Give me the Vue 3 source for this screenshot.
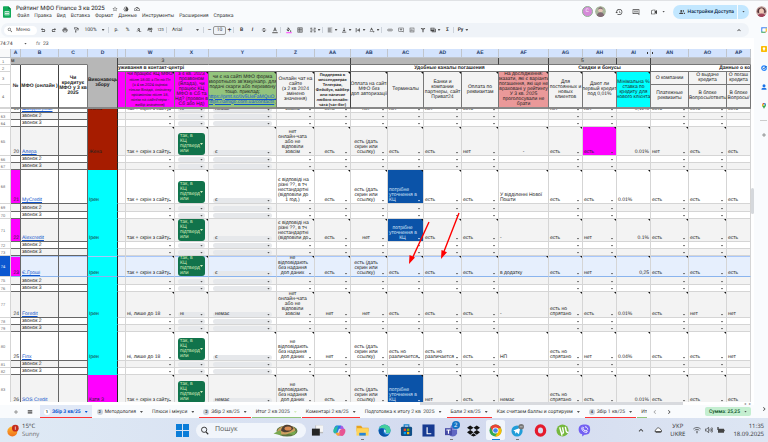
<template>
    <div class="page">
        <header class="top">
            <svg class="logo" viewBox="0 0 24 34">
                <path fill="#0fa958" d="M2 0h14l8 8v24a2 2 0 0 1-2 2H2a2 2 0 0 1-2-2V2a2 2 0 0 1 2-2z" />
                <path fill="#087f3f" d="M16 0l8 8h-8z" />
                <path fill="#fff" d="M5 15h14v12H5zm2 2v3h4v-3zm6 0v3h4v-3zm-6 5v3h4v-3zm6 0v3h4v-3z" fill-rule="evenodd" />
            </svg>
            <div class="titles">
                <div class="title-row">
                    <h1>Рейтинг МФО Finance 3 кв 2025</h1>
                    <button v-for="i in ['star', 'drive', 'cloud']" :key="i" class="icon-btn" :aria-label="i">
                        <svg viewBox="0 0 24 24"><path :d="icons[i]" /></svg>
                    </button>
                </div>
                <nav class="menu">
                    <button v-for="m in menu" :key="m">{{ m }}</button>
                </nav>
            </div>
            <div class="top-right">
                <span class="avatar avatar-letter">С</span>
                <span class="avatar avatar-green"><svg viewBox="0 0 24 24"><circle cx="12" cy="12" r="12" fill="#a9b79c" /><circle cx="12" cy="9" r="5" fill="#e5c7b8" /><path fill="#826b75" d="M4 21c1-10 15-10 16 0-4 4-12 4-16 0zM7 8c0-7 10-7 10 0-3-3-7-3-10 0z" /></svg></span>
                <button class="icon-btn big" aria-label="История"><svg viewBox="0 0 24 24"><path :d="icons.history" /></svg></button>
                <button class="icon-btn big" aria-label="Комментарии"><svg viewBox="0 0 24 24"><path :d="icons.comments" /></svg></button>
                <button class="icon-btn big video" aria-label="Видеовстреча"><svg viewBox="0 0 24 24"><path :d="icons.video" /></svg><i class="caret"></i></button>
                <button class="share"><svg viewBox="0 0 24 24"><path :d="icons.people" /></svg><span>Настройки Доступа</span><i class="share-line"></i><i class="caret"></i></button>
                <span class="avatar"><svg viewBox="0 0 24 24"><circle cx="12" cy="12" r="12" fill="#c9a9a4" /><path fill="#503036" d="M3 14C0 0 24 0 21 14l-3 2V9H7v7z" /><ellipse cx="12" cy="11" rx="5" ry="6" fill="#efc9b6" /><path fill="#a0455a" d="M4 21c2-6 14-6 16 0-4 4-12 4-16 0z" /></svg></span>
            </div>
        </header>

        <div class="middle">
            <main class="main">
                <div class="toolbar">
                    <label class="search-menu">
                        <svg viewBox="0 0 24 24"><path :d="icons.search" /></svg>
                        <input type="text" placeholder="Меню">
                    </label>
                    <template v-for="(t, n) in tools" :key="n">
                        <i v-if="t === '|'" class="sep"></i>
                        <input v-else-if="t.size" class="font-size" type="text" :value="t.size" aria-label="Размер шрифта">
                        <button v-else class="tool" :class="t.cls" :aria-label="t.icon || t.text">
                            <svg v-if="t.icon" viewBox="0 0 24 24"><path :d="icons[t.icon]" /><path v-if="t.bar" :fill="t.bar" d="M1 20h22v5H1z" /></svg>
                            <span v-else>{{ t.text }}</span>
                            <i v-if="t.drop" class="caret"></i>
                        </button>
                    </template>
                    <button class="icon-btn collapse" aria-label="Свернуть"><svg viewBox="0 0 24 24"><path :d="icons.up" /></svg></button>
                </div>

                <div class="formula">
                    <input class="name-box" type="text" value="74:74" aria-label="Диапазон">
                    <i class="caret"></i>
                    <label for="fx">fx</label>
                    <input id="fx" class="fx-input" type="text" value="23">
                </div>

                <div class="grid-wrap">
                    <div class="grid">
                        <table>
                            <colgroup>
                                <col class="c-num">
                                <col v-for="c in cols" :key="c.id" :class="'c-' + c.id">
                            </colgroup>
                            <thead>
                                <tr class="letters">
                                    <th></th>
                                    <th v-for="c in cols" :key="c.id">{{ c.id === 'V' ? '' : c.id }}<i v-if="c.id === 'AI'" class="hid hid-l"></i><i v-if="c.id === 'AN'" class="hid hid-r"></i></th>
                                </tr>
                                <tr class="h1">
                                    <th class="num">1</th>
                                    <th class="left">м</th>
                                    <th></th>
                                    <th></th>
                                    <th rowspan="4" class="dark-r">Виконавець<br>збору</th>
                                    <th colspan="3">3</th>
                                    <th colspan="3" class="dark-r"></th>
                                    <th colspan="4" class="dark-r"></th>
                                    <th class="dark-r"></th>
                                    <th colspan="2" class="dark-r">5</th>
                                    <th class="dark-r"></th>
                                    <th colspan="3"></th>
                                </tr>
                                <tr class="h2">
                                    <th class="num">2</th>
                                    <th rowspan="3" class="dark-r">№</th>
                                    <th rowspan="3" class="dark-r">МФО (онлайн )</th>
                                    <th rowspan="3">Чи<br>кредитує<br>МФО у 3 кв<br>2025</th>
                                    <th colspan="6" class="left dark-r">уживання в контакт-центрі</th>
                                    <th colspan="5" class="dark-r">Удобные каналы погашения</th>
                                    <th colspan="3" class="dark-r">Скидки и бонусы</th>
                                    <th colspan="3" class="right">Данные о ко</th>
                                </tr>
                                <tr class="h3">
                                    <th class="num">3</th>
                                    <th rowspan="2" class="magenta"></th>
                                    <th v-for="h in heads" :key="h.text" rowspan="2" :class="h.cls">
                                        <div class="head"><span v-if="h.lead">{{ h.lead }}</span><span :class="{ tiny: h.tiny }">{{ h.text }}</span><template v-if="h.links"><a href="#">https://prnt.sc/0v5UeFaMQuO_</a><span><a href="#">https://amigo.com.ua/contacts</a> )</span></template></div>
                                        <i class="note"></i>
                                    </th>
                                    <th>О компании</th>
                                    <th>О выдаче<br>кредита</th>
                                    <th>О погаш<br>кредита</th>
                                </tr>
                                <tr class="h4">
                                    <th class="num">4</th>
                                    <th>Платежные<br>реквизиты</th>
                                    <th>В блоке<br>Вопросы/ответы</th>
                                    <th>В блоке<br>Вопросы/</th>
                                </tr>
                            </thead>
                            <tbody>
                                <tr v-for="r in rows" :key="r.n" :class="{ odd: r.n % 2, selected: r.n === 74 }" :style="{ '--h': r.h + 'px' }">
                                    <th class="num"><div class="cell">{{ r.n === 62 ? '' : r.n }}</div></th>
                                    <td v-for="c in cols" :key="c.id" :class="cellClass(r, c)">
                                        <div class="cell">
                                            <a v-if="c.id === 'B' && r.v" href="#">{{ r.v.B }}</a>
                                            <button v-else-if="c.chip" class="chip" :class="{ green: value(r, c) === confirmed }"><span>{{ value(r, c) }}</span><i class="caret"></i></button>
                                            <template v-else>
                                                <span class="txt">{{ value(r, c) }}</span>
                                                <button v-if="c.drop" class="pick" aria-label="Выбрать"><i class="caret"></i></button>
                                            </template>
                                        </div>
                                        <i v-if="hasNote(r, c)" class="note"></i>
                                    </td>
                                </tr>
                            </tbody>
                        </table>
                        <svg class="arrows" viewBox="0 0 56 56">
                            <path stroke="#f00" stroke-width="1.4" d="M24 10L7 47M54 1L38 42" />
                            <path fill="#f00" d="M4 52l.5-9 5.500 2.500zM36 47l.5-9 5.500 2.200z" />
                        </svg>
                    </div>
                    <div class="vscroll"><i></i></div>
                </div>
                <div class="hscroll"><i></i><span>◂</span><span>▸</span></div>

                <footer class="tabs">
                    <button class="tab-icon plus" aria-label="Добавить лист"><svg viewBox="0 0 24 24"><path :d="icons.plus" /></svg></button>
                    <button class="tab-icon" aria-label="Все листы"><svg viewBox="0 0 24 24"><path :d="icons.list" /></svg></button>
                    <div class="tab-list">
                        <button v-for="t in tabs" :key="t.text" class="tab" :class="[t.color, { active: t.active }]">
                            <b v-if="t.badge">{{ t.badge }}</b>
                            <span>{{ t.text }}</span>
                            <i class="caret"></i>
                        </button>
                    </div>
                    <button class="tab-icon nav" aria-label="Назад"><svg viewBox="0 0 24 24"><path opacity=".5" :d="icons.back" /></svg></button>
                    <button class="tab-icon nav" aria-label="Вперёд"><svg viewBox="0 0 24 24"><path :d="icons.next" /></svg></button>
                    <button class="sum">Сумма: 25,25<i class="caret"></i></button>
                </footer>
            </main>

            <aside class="side">
                <button aria-label="Календарь"><svg viewBox="0 0 24 24"><path fill="#4285f4" d="M1 1h18v5H6v13H1z" /><path fill="#1967d2" d="M19 1h4v5h-4z" /><path fill="#fbbc04" d="M18 6h5v12h-5z" /><path fill="#34a853" d="M1 18h17v5H1z" /><path fill="#ea4335" d="M18 18h5l-5 5z" /><path fill="#fff" d="M6 6h12v12H6z" /></svg></button>
                <button aria-label="Keep"><svg viewBox="0 0 24 24"><rect width="24" height="24" rx="3" fill="#fbbc04" /><path fill="#fff" d="M12 5a5 5 0 0 0-3 9v2h6v-2a5 5 0 0 0-3-9zM9 17h6v2H9z" /></svg></button>
                <button aria-label="Задачи"><svg viewBox="0 0 24 24"><circle cx="12" cy="12" r="9" fill="none" stroke="#2684fc" stroke-width="5" /><path fill="none" stroke="#0757b8" stroke-width="4" d="M8 11l4 4L22 4" /></svg></button>
                <button aria-label="Контакты"><svg viewBox="0 0 24 24"><circle cx="12" cy="7" r="6" fill="#1a73e8" /><path fill="#1a73e8" d="M2 23v-4c2-6 18-6 20 0v4z" /></svg></button>
                <button aria-label="Карты"><svg viewBox="0 0 24 24"><path fill="#34a853" d="M12 24C10 16 4 15 4 8l8-8c6 0 8 4 8 8 0 7-6 8-8 16z" /><path fill="#4285f4" d="M12 0c5 0 7 3 8 6l-8 2z" /><path fill="#ea4335" d="M5 4c2-3 4-4 7-4v8z" /><path fill="#fbbc04" d="M4 8l1-4 7 4-6 6z" /><circle cx="12" cy="8" r="3" fill="#fff" /></svg></button>
                <hr>
                <button aria-label="Дополнения"><svg viewBox="0 0 24 24"><path fill="#444" :d="icons.plus" /></svg></button>
                <button class="side-end" aria-label="Скрыть панель"><svg viewBox="0 0 24 24"><path fill="#444" :d="icons.next" /></svg></button>
            </aside>
        </div>

        <div class="taskbar">
            <div class="weather">
                <svg viewBox="0 0 36 36"><defs><linearGradient id="sun" x1="0" y1="0" x2="0" y2="1"><stop offset="0" stop-color="#ffb52b" /><stop offset="1" stop-color="#f0701c" /></linearGradient></defs><circle cx="16" cy="21" r="15" fill="url(#sun)" /><circle cx="25" cy="11" r="10" fill="#c42b1c" /><path stroke="#fff" stroke-width="2" d="M25 6v10" /></svg>
                <div>15°C<br><span>Sunny</span></div>
            </div>
            <button class="start" aria-label="Пуск"><svg viewBox="0 0 26 26"><path fill="#0b7dd8" d="M0 0h12v12H0zM14 0h12v12H14zM0 14h12v12H0zM14 14h12v12H14z" /></svg></button>
            <label class="win-search">
                <svg viewBox="0 0 24 24"><circle cx="11" cy="10" r="7" fill="none" stroke="#333" stroke-width="2.500" /><path stroke="#333" stroke-width="3" d="M16 16l6 6" /></svg>
                <input type="text" placeholder="Пошук">
                <svg class="food" viewBox="0 0 50 28"><ellipse cx="28" cy="16" rx="21" ry="11" fill="#5c7540" /><path fill="#cda060" d="M8 20C8 4 38 0 44 12c4 9-27 15-36 8z" /><path fill="#4f4034" d="M16 15c2-14 20-15 25-4-5 8-20 10-25 4z" /><ellipse cx="30" cy="11" rx="7" ry="4" fill="#d98a52" /><path fill="#78a850" d="M1 21l14-7 2 11zM29 22l18-7-4 9z" /></svg>
            </label>
            <div class="apps">
                <button class="app" aria-label="Представление задач"><svg viewBox="0 0 28 28"><path fill="#bbb" d="M9 3h17v17H9z" /><path fill="#f5f5f5" d="M11 3h15v14H11z" /><path fill="#252525" d="M2 10h17v15H2z" /></svg></button>
                <button class="app" aria-label="Copilot"><svg viewBox="0 0 28 28"><path fill="#2677e8" d="M7 3h10l4 7h-8L9 20H4C-1 19 2 5 7 3z" /><path fill="#28bda0" d="M3 8l8-5-4 17c-8 1-7-6-4-12z" /><path fill="#e75493" d="M11 25l4-12 5-3h4c6 2 1 15-4 16z" /><path fill="#f5a43b" d="M6 19h10l-3 6c-4 2-7-2-7-6z" /><path fill="#a45ee5" d="M17 3c6 0 5 7 8 8H15z" /></svg></button>
                <button class="app run" aria-label="Проводник"><svg viewBox="0 0 28 28"><path fill="#e6a21f" d="M1 4h10l3 4h13v8H1z" /><path fill="#ffd458" d="M1 9h26v16H1z" /><path fill="#2785d6" d="M7 19h14v6H7z" /></svg></button>
                <button class="app" aria-label="Edge"><svg viewBox="0 0 28 28"><circle cx="14" cy="14" r="13" fill="#1479cc" /><path fill="#44cf9d" d="M2 10C6-3 27-1 27 14c0 7-9 7-10 3 3-8-7-10-15-7z" /><path fill="#0b54a6" d="M2 13c8-8 13 0 9 4 0 6 7 8 13 6-11 10-24 0-22-10z" /><path fill="#e3f2ff" d="M13 12c4 0 5 4 3 6 1 3 6 3 10 1-4 5-15 2-13-7z" /></svg></button>
                <button class="app" aria-label="Store"><svg viewBox="0 0 28 28"><path fill="none" stroke="#1684c9" stroke-width="2.500" d="M9 7V2h10v5" /><rect x="2" y="6" width="24" height="20" rx="3" fill="#114f87" /><path fill="#f25022" d="M8 10h5v5H8z" /><path fill="#7fba00" d="M15 10h5v5h-5z" /><path fill="#00a4ef" d="M8 17h5v5H8z" /><path fill="#ffb900" d="M15 17h5v5h-5z" /></svg></button>
                <button class="app" aria-label="L"><svg viewBox="0 0 28 28"><path fill="#173a91" d="M1 1h26v26H1z" /><path fill="none" stroke="#fff" stroke-width="2.500" d="M11 7v14h9" /></svg></button>
                <button class="app run" aria-label="Teams"><svg viewBox="0 0 28 28"><circle cx="17" cy="7" r="5" fill="#7076d0" /><path fill="#6066c2" d="M8 12h18v8c-3 10-17 9-18 0z" /><path fill="#454aa5" d="M0 9h15v15H0z" /><path fill="none" stroke="#fff" stroke-width="2.500" d="M3 13h9M7.500 13v8" /></svg><b>2</b></button>
                <button class="app" aria-label="Dropbox"><svg viewBox="0 0 28 28"><path fill="#111" d="M7 3l7 5-7 5-7-5zM21 3l7 5-7 5-7-5zM7 13l7 5-7 5-7-5zM21 13l7 5-7 5-7-5zM14 20l6 4-6 3-6-3z" /></svg></button>
                <button class="app current" aria-label="Chrome"><svg viewBox="0 0 28 28"><circle cx="14" cy="14" r="13" fill="#34a853" /><path fill="#ea4335" d="M3 7C9-2 22 0 26 9H14l-5 8z" /><path fill="#fbbc04" d="M26 9c4 12-5 19-13 18l7-11-3-7z" /><circle cx="14" cy="14" r="6.500" fill="#fff" /><circle cx="14" cy="14" r="5" fill="#4285f4" /></svg></button>
                <button class="app run" aria-label="Telegram"><svg viewBox="0 0 28 28"><circle cx="13" cy="15" r="12" fill="#229ed9" /><path fill="#fff" d="M5 14l15-6-3 14-5-4-3 3v-5z" /><circle cx="22" cy="6" r="6" fill="#777" /><path stroke="#ddd" stroke-width="1.500" d="M19 6h6" /></svg></button>
                <button class="app" aria-label="Opera"><svg viewBox="0 0 28 28"><ellipse cx="14" cy="14" rx="9" ry="10" fill="none" stroke="#e51b2d" stroke-width="7" /></svg></button>
                <button class="app" aria-label="uTorrent"><svg viewBox="0 0 28 28"><circle cx="14" cy="14" r="13" fill="#76b83f" /><path fill="none" stroke="#fff" stroke-width="3" d="M8 7l3 11c1 3 6 2 5-1L14 7M20 6l2 9c1 3 3 4 4 2M11 17l2 8" /></svg></button>
                <button class="app" aria-label="Viber"><svg viewBox="0 0 28 28"><path fill="#7360f2" d="M5 3c5-3 15-3 19 1 3 4 3 13-1 17-3 2-7 2-9 2l-5 4v-5C-1 20 0 6 5 3z" /><path fill="none" stroke="#fff" stroke-width="2" d="M9 7c-3 5 4 12 10 11l1-3-3-1-2 1-4-5 1-2-2-2M15 6c4 0 6 3 6 6" /></svg></button>
            </div>
            <div class="tray">
                <svg viewBox="0 0 24 24"><path :d="icons.up" /></svg>
                <svg viewBox="0 0 24 24"><path fill="#fff" stroke="#444" stroke-width="2.500" d="M6 19a5 5 0 0 1 1-9c2-6 10-6 12 0 5 1 5 9 0 9z" /><path fill="#555" d="M2 15h20v4H4z" /></svg>
                <div class="lang">УКР<br>UKRE</div>
                <svg viewBox="0 0 24 24"><path fill="none" stroke="#333" stroke-width="2" d="M1 9c7-6 15-6 22 0M5 13c5-4 9-4 14 0M9 17c2-2 4-2 6 0" /><circle cx="12" cy="20" r="2" /></svg>
                <svg viewBox="0 0 24 24"><path fill="none" stroke="#333" stroke-width="2" d="M1 9h4l6-5v16l-6-5H1zM14 9c2 2 2 4 0 6M17 6c4 4 4 8 0 12M20 4c5 5 5 11 0 16" /></svg>
                <svg viewBox="0 0 24 24"><path d="M1 3h4v5h16v3h2v5h-2v4H3v-8H1z" /></svg>
                <div class="clock">11:35<br>18.09.2025</div>
            </div>
        </div>
    </div>
</template>

<script setup>
const menu = ['Файл', 'Правка', 'Вид', 'Вставка', 'Формат', 'Данные', 'Инструменты', 'Расширения', 'Справка'];

const icons = {
    star: 'M22 9.200l-7.200-.6L12 2 9.200 8.600 2 9.200l5.500 4.800L5.800 21 12 17.300 18.200 21l-1.600-7L22 9.200zM12 15.400l-3.800 2.300 1-4.300-3.300-2.900 4.400-.4L12 6.100l1.700 4 4.400.4-3.300 2.900 1 4.300z',
    drive: 'M8 3h8l6 10-4 8H6l-4-8zm1 2L4.500 13 7 19h4l-3-5 5-9zm3 5l-2 4h4z',
    cloud: 'M19 10A7 7 0 0 0 6 8a6 6 0 0 0 0 12h13a5 5 0 0 0 0-10zm0 8H6a4 4 0 0 1 0-8h1.500a5 5 0 0 1 9.500 2h2a3 3 0 0 1 0 6zM10 16l-3-3 1.400-1.400L10 13.200l4-4 1.400 1.400z',
    history: 'M13 3a9 9 0 0 0-9 9H1l4 4 4-4H6a7 7 0 1 1 2 5l-1.400 1.400A9 9 0 1 0 13 3zm-1 5v5l4.300 2.500.7-1.200-3.500-2.100V8z',
    comments: 'M22 4H2v14h16l4 4zM20 6v11l-1-1H4V6zM6 8h12v2H6zm0 3h12v2H6z',
    video: 'M16 10V5H8L3 8v11h13v-4l5 4V6zm-2 7H5V9l4-2h5z',
    people: 'M9 12a4 4 0 1 0 0-8 4 4 0 0 0 0 8zm0 2c-3 0-8 1-8 4v2h16v-2c0-3-5-4-8-4zm7-2a4 4 0 0 0 0-8l-1 .2a6 6 0 0 1 0 7.600zm2 2.300c2 1 2 2 2 5.700h4v-2c0-2-3-3.300-6-3.700z',
    search: 'M15.500 14h-.8l-.3-.3A6.500 6.500 0 1 0 13.700 14.400l.3.3v.8l5 5 1.500-1.500zm-6 0a4.500 4.500 0 1 1 0-9 4.500 4.500 0 0 1 0 9z',
    undo: 'M4 9l6-5v4h5a6 6 0 0 1 0 12H7v-3h8a3 3 0 0 0 0-6h-5v4z',
    redo: 'M20 9l-6-5v4H9a6 6 0 0 0 0 12h8v-3H9a3 3 0 0 1 0-6h5v4z',
    print: 'M19 8H5c-2 0-3 1-3 3v6h4v4h12v-4h4v-6c0-2-1-3-3-3zm-3 11H8v-5h8zM18 3H6v4h12zM4 15v-4h16v4h-2v-3H6v3z',
    paint: 'M18 4V2H4v7h14V7h2v4H10v4H9v7h4v-7h-1v-2h10V4zM16 7H6V4h10z',
    decLess: 'M3 15h3v3H3zM11 4c6 0 6 12 0 12s-6-12 0-12zm0 3c-2 0-2 6 0 6s2-6 0-6zM21 16v2h-6v3l-4-4 4-4v3z',
    decMore: 'M1 11h3v3H1zM8 3c6 0 6 11 0 11S2 3 8 3zm0 3c-2 0-2 5 0 5s2-5 0-5zM17 3c6 0 6 11 0 11S11 3 17 3zm0 3c-2 0-2 5 0 5s2-5 0-5zM10 17h6v-3l4 4-4 4v-3h-6z',
    strike: 'M3 11h18v2H3zM7 9c-2-7 10-7 10-1h-3c0-3-6-2-4 1zM7 15h3c0 4 6 2 4-1h3c1 8-10 8-10 1z',
    color: 'M10.500 2L5 17h3l1-3h6l1 3h3L13.500 2zM10 11l2-6 2 6z',
    fill: 'M16 9L8 1 6 3l2 2-6 6 7 7zM9 7l4 4H5zM19 12s-3 3-3 5c0 3 5 3 5 0 0-2-2-5-2-5z',
    borders: 'M2 2h20v20H2zm3 3v5h5V5zm8 0v5h6V5zm-8 8v6h5v-6zm8 0v6h6v-6z',
    merge: 'M2 3h7v3H5v3H2zM15 3h7v6h-3V6h-4zM2 15h3v3h4v3H2zM19 15h3v6h-7v-3h4zM2 11h5V8l4 4-4 4v-3H2zM22 11h-5V8l-4 4 4 4v-3h5z',
    align: 'M3 3h18v2H3zm0 4h12v2H3zm0 4h18v2H3zm0 4h12v2H3zm0 4h18v2H3z',
    valign: 'M11 3h3v9h4l-6 6-5-6h4zM4 19h17v3H4z',
    wrap: 'M3 4h3v17H3zM18 4h2v17h-2zM8 11h6V7l5 5-5 6v-4H8z',
    rotate: 'M9 3L4 15h2l2-3h5l1 3h3L11 3zm0 7l1.500-4L12 10zM3 18h15v-3l4 4-4 4v-3H3z',
    link: 'M4 12a3 3 0 0 1 3-3h4V7H7a5 5 0 0 0 0 10h4v-2H7a3 3 0 0 1-3-3zm4 1h8v-2H8zm9-6h-4v2h4a3 3 0 0 1 0 6h-4v2h4a5 5 0 0 0 0-10z',
    comment: 'M2 3h20v19l-4-4H2zm2 2v11h16V5zm7 1h2v4h4v2h-4v3h-2v-3H7v-2h4z',
    chart: 'M3 3h18v18H3zm2 2v14h14V5zm2 5h2v7H7zm4-3h2v10h-2zm4 6h2v4h-2z',
    filter: 'M3 4h18l-7 9v8h-4v-8zM8 6l4 5 4-5z',
    views: 'M2 3h16v14H2zm18 4h3v14H7v-3h13zM5 6v2h10V6zm0 4v2h10v-2z',
    up: 'M12 8l-7 7 2 2 5-5 5 5 2-2z',
    back: 'M16 6l-2-2-8 8 8 8 2-2-6-6z',
    next: 'M8 6l2-2 8 8-8 8-2-2 6-6z',
    plus: 'M20 13h-7v7h-2v-7H4v-2h7V4h2v7h7z',
    list: 'M3 4h18v3H3zm0 5h18v2H3zm0 4h18v3H3zm0 5h18v2H3z',
};

const tools = [
    { icon: 'undo' }, { icon: 'redo' }, { icon: 'print' }, { icon: 'paint' },
    { text: '100%', drop: true, cls: 'zoom' }, '|',
    { text: 'р.' }, { text: '%' }, { icon: 'decLess' }, { icon: 'decMore' }, { text: '123', cls: 'small' }, '|',
    { text: 'Arial', drop: true, cls: 'font' }, '|',
    { text: '−', cls: 'step' }, { size: 10 }, { text: '+', cls: 'step' }, '|',
    { text: 'B', cls: 'bold' }, { text: 'I', cls: 'italic' }, { icon: 'strike' }, { icon: 'color', bar: '#777' }, '|',
    { icon: 'fill', bar: '#ff66ff' }, { icon: 'borders' }, { icon: 'merge', drop: true, cls: 'drop wide' }, '|',
    { icon: 'align', drop: true, cls: 'drop' }, { icon: 'valign', drop: true, cls: 'drop' },
    { icon: 'wrap', drop: true, cls: 'drop' }, { icon: 'rotate', drop: true, cls: 'drop' }, '|',
    { icon: 'link' }, { icon: 'comment' }, { icon: 'chart' }, { icon: 'filter' },
    { icon: 'views', drop: true, cls: 'drop' }, { text: 'Σ', cls: 'bold' }, '|',
    { text: 'Pу', drop: true, cls: 'drop bold' },
];

// drop - стрілка вибору, chip - випадаючий список у вигляді плашки
const cols = [
    { id: 'A' }, { id: 'B' }, { id: 'C' }, { id: 'D' }, { id: 'V' },
    { id: 'W', drop: true }, { id: 'X', chip: true }, { id: 'Y', chip: true },
    { id: 'Z', drop: true }, { id: 'AA', drop: true }, { id: 'AB', drop: true },
    { id: 'AC', drop: true }, { id: 'AD', drop: true }, { id: 'AE', drop: true },
    { id: 'AF' }, { id: 'AG', drop: true }, { id: 'AH', drop: true }, { id: 'AI' },
    { id: 'AN', drop: true }, { id: 'AO', drop: true }, { id: 'AP' },
];

const heads = [
    { cls: 'magenta', lead: 'чи працює КЦ МФО', text: 'після 18:00 з Пн по Пт\n(з 4 кв.2024 оцінює\nтільки Влада, спочатку\nпрозвоном після 18,\nпотім на сайті/терм -\nвибір значення)', tiny: true },
    { cls: 'magenta', text: 'з 4 кв. 2023\nпрозвоном\n(Влада), чи\nпрацює КЦ\nМФО в Сб та\nНд? (провон в\nСб або Нд)', tiny: false },
    { cls: 'green-bg', text: "чи є на сайті МФО форма\nзворотнього зв'язку/напр. для\nподачі скарги або перезвону\nтощо. приклад:", links: true },
    { text: 'Онлайн чат на\nсайте\n(з 2 кв 2024\nзмінено\nзначення)' },
    { cls: 'strong dark-r', text: 'Поддержка в\nмессенджерах\nТелеграм,\nФейсбук, вайбер\nили наличие\nлюбого онлайн-\nчата (чат-бот)', tiny: true },
    { text: 'Оплата на сайті\nМФО без\nдоп авторизації' },
    { text: 'Терминалы' },
    { text: 'Банки и\nкомпании\nпартнеры, сайт\nПриват24' },
    { text: 'Оплата по\nреквизитам' },
    { cls: 'rose', text: 'На дослідження:\nвказати, які є варіанти\nпогашення, які ще не\nвраховані у рейтингу\nУ 3 кв. 2025\nпроголосували не\nбрати' },
    { text: 'Для\nпостоянных и\nновых\nклиентов' },
    { text: 'Дают ли\nпервый кредит\nпод 0,01%' },
    { cls: 'cyan', text: 'Мінімальна %\nставка по\nкредиту для\nнового клієнта' },
];

const confirmed = 'так, в\nКЦ\nпідтверд\nили';
const site = 'так + скрін з сайту';
const noChat = 'нет\nонлайн-чата\nабо не\nвідповіли\nзовсім';
const noData = 'не\nвідповідають\nбез надання\nдоп даних';
const shot = 'есть (дать\nскрин или\nссылку)';
const clarify = 'потрібне\nуточнення в\nКЦ';
const hidden = 'есть но\nспрятано';
const merged = 'есть но\nразличается';

const make = (...a) => Object.fromEntries(['A', 'B', 'D', 'W', 'X', 'Y', 'Z', 'AA', 'AB', 'AC', 'AD', 'AE', 'AF', 'AG', 'AH', 'AI', 'AN', 'AO', 'AP'].map((k, i) => [k, a[i]]));

const rows = [
    { n: 62, h: 4, v: make('19', 'Швидкогроші', 'Жена', site, 'ні', 'немає', 'зовсім', 'есть', 'нет', 'нет', 'нет', 'есть', '-', 'нет', 'нет', '0,12%', 'есть', 'есть', 'есть') },
    { n: 63, h: 7 },
    { n: 64, h: 7 },
    { n: 65, h: 29, v: make('20', 'Алера', 'Жена', site, confirmed, 'є', noChat, 'есть', shot, 'есть', 'есть', 'нет', '-', 'есть', 'есть', '0.01%', 'нет', 'есть', 'есть'), marks: { AH: 'magenta', AF: 'center' } },
    { n: 66, h: 7 },
    { n: 67, h: 7 },
    { n: 68, h: 34, v: make('21', 'MyCredit', 'Ірен', site, confirmed, 'є', 'є відповіді на\nрізні ??, в тч\nнестандартні\n(відповіли до\n1 год.)', 'есть', shot, clarify, 'есть', 'есть', 'У відділенні Нової\nПошти', 'есть', 'есть', '0.01%', 'есть', 'есть', 'есть'), marks: { A: 'magenta', AC: 'blue', AI: 'left' }, plain: ['Y'] },
    { n: 69, h: 8 },
    { n: 70, h: 7 },
    { n: 71, h: 23, v: make('22', 'Alexcredit', 'Ірен', site, confirmed, 'є', 'є відповіді на\nрізні ??, в тч\nнестандартні\n(відповіли до', 'есть', 'нет', clarify, 'есть', 'есть', '-', 'есть', 'нет', '0.1%', 'есть', 'есть', 'есть'), marks: { A: 'magenta', AC: 'blue center' }, plain: ['Y', 'AF'] },
    { n: 72, h: 7 },
    { n: 73, h: 7 },
    { n: 74, h: 21, v: make('23', 'Є.Гроші', 'Ірен', site, confirmed, 'є', noData, 'есть', shot, 'есть', 'есть', 'есть', 'в додатку', 'есть', 'нет', '0,25', 'есть', 'есть', 'есть'), marks: { A: 'magenta' }, plain: ['Y'] },
    { n: 75, h: 8 },
    { n: 76, h: 7 },
    { n: 77, h: 26, v: make('24', 'Foredit', 'Ірен', 'ні, лише до 18', 'ні', 'немає', noChat, 'нет', 'нет', 'есть', 'есть', 'есть', '-', hidden, 'есть', '0.01%', 'есть', 'нет', 'нет'), marks: { AI: 'left' }, plain: ['Y', 'AF'] },
    { n: 78, h: 7 },
    { n: 79, h: 7 },
    { n: 80, h: 29, v: make('25', 'Finx', 'Ірен', 'ні, лише до 18', confirmed, 'є', noData, 'нет', shot, merged, merged, 'есть', 'НП', hidden, 'нет', '0.04%', 'есть', 'есть', 'нет'), marks: { AI: 'left' } },
    { n: 81, h: 7 },
    { n: 82, h: 7 },
    { n: 83, h: 29, v: make('26', 'SOS Credit', 'Катя З', site, confirmed, 'немає', noData, 'есть', shot, clarify, 'нет', 'есть', 'немає', hidden, 'есть', '0.01%', 'есть', 'есть', 'есть'), marks: { AC: 'blue' } },
];

const value = (r, c) => {
    if (r.v) return r.v[c.id];
    if (c.id === 'B') return [63, 66, 69, 72, 75, 78, 81].includes(r.n) ? 'звонок 2' : 'звонок 3';
    return '';
};

const executor = (n) => {
    if (n < 68) return 'maroon';
    return n < 83 ? 'cyan' : 'magenta';
};

const cellClass = (r, c) => [
    'k-' + c.id,
    c.id === 'D' ? executor(r.n) : '',
    r.marks?.[c.id] ?? '',
];

const hasNote = (r, c) => r.v && r.n > 62 && !['A', 'B', 'C', 'D', 'V', 'AP'].includes(c.id) && !r.plain?.includes(c.id);

const tabs = [
    { text: 'Збір 3 кв/25', badge: 1, color: 'red', active: true },
    { text: 'Методология', badge: 2 },
    { text: 'Плюси і мінуси' },
    { text: 'Збір 2 кв/25', badge: 2, color: 'red' },
    { text: 'Итог 2 кв 2025', color: 'green' },
    { text: 'Коментарі 2 кв/25', color: 'red' },
    { text: 'Подготовка к итогу 2 кв  2025' },
    { text: 'Бали 2 кв/25', color: 'red' },
    { text: 'Как считаем баллы и сортируем' },
    { text: 'Збір 1 кв/25', badge: 4, color: 'red' },
    { text: 'Итог 1 кв', color: 'green' },
];
</script>

<style>
body {
    margin: 0;
    overflow: hidden;
}
</style>

<style scoped>
.page {
    height: 100vh;
    display: flex;
    flex-direction: column;
    overflow: hidden;
    background: #f9fbfd;
    color: #333;
    font: 5px/6px Roboto, sans-serif;
    text-rendering: geometricPrecision;
}

.page * {
    box-sizing: border-box;
}

button,
input {
    font: inherit;
    color: inherit;
    text-rendering: inherit;
    padding: 0;
    margin: 0;
    border: 0;
    background: none;
    min-width: 0;
}

svg {
    display: block;
    flex: none;
    fill: #444;
}

.caret {
    flex: none;
    width: 3px;
    height: 2px;
    background: #555;
    clip-path: polygon(0 0, 100% 0, 50% 100%);
}

/* верхня панель */
.top {
    flex: none;
    height: 22px;
    display: flex;
    align-items: center;
    padding: 0 1px 0 3px;
    border-top: 1px solid #e0e2e5;
}

.logo {
    width: 8px;
    height: 12px;
    margin-right: 5px;
}

.title-row {
    display: flex;
    align-items: center;
    gap: 5px;
}

h1 {
    margin: 0 2px 0 0;
    font-size: 6px;
    line-height: 8px;
    font-weight: 400;
    color: #222;
}

.icon-btn svg {
    width: 6px;
    height: 6px;
}

.menu {
    display: flex;
    gap: 5px;
    padding-left: 1px;
}

.top-right {
    margin-left: auto;
    display: flex;
    align-items: center;
}

.avatar {
    width: 11px;
    height: 11px;
    border-radius: 50%;
    overflow: hidden;
    margin-right: 2px;
}

.avatar-letter {
    background: #d58ad8;
    border: 1px solid #8fb493;
    color: #fff;
    line-height: 9px;
    text-align: center;
}

.avatar-green {
    margin-right: 5px;
}

.top-right > .avatar:last-child {
    margin: 0 0 0 7px;
}

.icon-btn.big {
    width: 17px;
    display: flex;
    justify-content: center;
}

.big svg {
    width: 8px;
    height: 8px;
}

.icon-btn.video {
    width: 26px;
    align-items: center;
    gap: 4px;
}

.share {
    display: flex;
    align-items: center;
    height: 14px;
    margin-left: 2px;
    padding: 0 4px 0 6px;
    border-radius: 7px;
    background: #c2e7ff;
    color: #0b2545;
    font-weight: 500;
    gap: 3px;
}

.share svg {
    width: 6px;
    height: 6px;
}

.share-line {
    width: 1px;
    height: 14px;
    background: #f9fbfd;
    margin: 0 1px 0 0;
}

.middle {
    flex: 1;
    min-height: 0;
    display: flex;
}

.main {
    flex: 1;
    min-width: 0;
    display: flex;
    flex-direction: column;
}

/* панель інструментів */
.toolbar {
    flex: none;
    display: flex;
    align-items: center;
    height: 14px;
    margin: 1px 5px 1px 1px;
    padding: 0 7px 0 3px;
    border-radius: 7px;
    background: #eff3f8;
}

.search-menu {
    flex: none;
    width: 33px;
    height: 9px;
    padding-left: 3px;
    display: flex;
    align-items: center;
    gap: 3px;
    border-radius: 5px;
    background: #fff;
}

.search-menu svg {
    width: 6px;
    height: 6px;
}

.search-menu input {
    width: 18px;
}

.tool {
    flex: none;
    width: 11px;
    display: flex;
    align-items: center;
    justify-content: center;
}

.tool svg {
    width: 6px;
    height: 6px;
    overflow: visible;
}

.tool.zoom {
    width: 27px;
    gap: 5px;
}

.tool.font {
    width: 34px;
    padding: 0 4px 0 3px;
    justify-content: space-between;
}

.tool.drop {
    width: 14px;
    gap: 2px;
}

.tool.wide {
    width: 17px;
    padding-left: 3px;
}

.tool.step {
    width: 7px;
    font-size: 7px;
}

.tool.small {
    font-size: 4px;
}

.tool.bold {
    font-weight: 700;
}

.tool.italic {
    font-style: italic;
    font-weight: 700;
}

.sep {
    flex: none;
    width: 3px;
    height: 6px;
    border-left: 1px solid #ccd2da;
}

.font-size {
    width: 13px;
    height: 9px;
    text-align: center;
    border: 1px solid #999;
    border-radius: 2px;
}

.collapse {
    margin-left: auto;
}

.formula {
    flex: none;
    display: flex;
    align-items: center;
    height: 11px;
    background: #fff;
}

.name-box {
    width: 24px;
}

.formula label {
    margin-left: 9px;
    width: 7px;
    font-style: italic;
    color: #777;
}

.fx-input {
    flex: 1;
}

/* таблиця */
.grid-wrap {
    flex: 1;
    min-height: 0;
    display: flex;
}

.grid {
    flex: 1;
    min-width: 0;
    position: relative;
    overflow: hidden;
    background: #fff;
}

table {
    width: 100%;
    table-layout: fixed;
    border-collapse: separate;
    border-spacing: 0;
    font: 5px/5px "Liberation Sans", Arial, sans-serif;
    color: #222;
}

.c-num { width: 11px; }
.c-A { width: 10px; }
.c-B { width: 38px; }
.c-C { width: 29px; }
.c-D { width: 30px; }
.c-V { width: 8px; }
.c-W { width: 49px; }
.c-X { width: 34px; }
.c-Y { width: 68px; }
.c-Z { width: 38px; }
.c-AA { width: 36px; }
.c-AB { width: 37px; }
.c-AC { width: 36px; }
.c-AD { width: 38px; }
.c-AE { width: 37px; }
.c-AF { width: 50px; }
.c-AG { width: 34px; }
.c-AH { width: 34px; }
.c-AI { width: 34px; }
.c-AN { width: 38px; }
.c-AO { width: 38px; }

th,
td {
    position: relative;
    padding: 0;
    overflow: hidden;
    white-space: pre;
    border-right: 1px solid #d5d5d5;
    border-bottom: 1px solid #d5d5d5;
}

thead th {
    font-weight: 400;
    background: #f3f3f3;
    border-right-color: #777;
    border-bottom-color: #777;
}

.letters { height: 9px; }
.h1 { height: 7px; }
.h2 { height: 7px; }
.h3 { height: 13px; }
.h4 { height: 24px; }

.letters th {
    background: #d3e3fd;
    border-color: #c0c5cc;
    color: #1f3a68;
    font-weight: 700;
}

.letters th:first-child {
    background: #f8f9fa;
}

.hid {
    position: absolute;
    top: 3px;
    width: 1px;
    height: 2px;
    background: #333;
}

.hid-l { right: 2px; }
.hid-r { left: 1px; }

.h1 th {
    background: #b7b7b7;
    border-right-color: #b7b7b7;
}

.h1 th[rowspan],
.h2 th {
    font-weight: 700;
}

.h2 th {
    background: #fff;
}

.h4 th,
.h3 th[rowspan],
.h2 th[rowspan],
.h1 th[rowspan] {
    border-bottom: 2px solid #888;
}

.head {
    height: 35px;
    display: flex;
    flex-direction: column;
    align-items: center;
    justify-content: center;
    overflow: hidden;
}

.tiny {
    font-size: 4px;
}

.strong {
    font-weight: 700;
}

thead th.dark-r {
    border-right-color: #444;
}

th.left {
    text-align: left;
}

th.right {
    text-align: right;
}

tr .num,
thead tr .num {
    background: #fff;
    border-color: #d5d5d5;
    color: #666;
    font-size: 4px;
    font-weight: 400;
    text-align: center;
    padding-right: 4px;
}

.cell {
    height: calc(var(--h) - 1px);
    display: flex;
    align-items: flex-end;
    overflow: hidden;
    padding: 0 1px;
}

.num .cell {
    align-items: center;
    justify-content: center;
    padding: 0;
}

.txt {
    flex: 1;
    min-width: 0;
}

.pick {
    flex: none;
    width: 6px;
    height: 5px;
    display: flex;
    align-items: center;
    justify-content: center;
}

.odd td {
    background: #f3f3f3;
}

td a,
th a {
    color: #1155cc;
    text-decoration: underline;
}

td.k-A,
td.k-B,
td.k-C {
    border-bottom-color: #666;
    border-right-color: #666;
}

td.k-A {
    text-align: right;
}

td.k-D {
    border-right: 1px solid #222;
}

td.k-AI {
    text-align: right;
}

td.k-Z,
td.k-AA,
td.k-AB,
td.center {
    text-align: center;
}

td.left {
    text-align: left;
}

.page .magenta {
    background: #f0f;
}

.page .cyan {
    background: #0ff;
}

.page .maroon {
    background: #a61c00;
}

td.cyan { border-bottom-color: #0ff; }
td.maroon { border-bottom-color: #a61c00; }

.page .blue {
    background: #0b53a8;
    color: #d6e6fa;
}

.blue .caret {
    background: #d6e6fa;
}

.page .green-bg {
    background: #93c47d;
}

.page .rose {
    background: #ea9999;
}

.k-X .cell { padding: 0 3px; }
.k-Y .cell { padding: 0 4px; }

.chip {
    width: 100%;
    min-height: 5px;
    max-height: 100%;
    padding: 0 2px;
    display: flex;
    align-items: center;
    justify-content: space-between;
    text-align: left;
    white-space: pre;
    border-radius: 3px;
    background: #e6e8eb;
    overflow: hidden;
}

.chip.green {
    height: 22px;
    background: #11734b;
    color: #d4edbc;
}

.green .caret {
    background: #d4edbc;
}

.note {
    position: absolute;
    top: 0;
    right: 0;
    width: 2px;
    height: 2px;
    background: #111;
    clip-path: polygon(0 0, 100% 0, 100% 100%);
}

.selected td {
    border-bottom-color: #8ab4ee;
    box-shadow: inset 0 1px #a8c7fa;
}

.selected td:not(.magenta, .cyan) {
    background: #e6effd;
}

.page .selected .num {
    background: #0b57d0;
    color: #fff;
}

.arrows {
    position: absolute;
    left: 405px;
    top: 163px;
    width: 56px;
    height: 56px;
    pointer-events: none;
}

.vscroll {
    width: 3px;
    display: flex;
    flex-direction: column;
    background: #fff;
}

.vscroll i {
    margin-top: 139px;
    height: 26px;
    border-radius: 2px;
    background: #d5d8dc;
}

.hscroll {
    flex: none;
    height: 3px;
    display: flex;
    justify-content: flex-end;
    align-items: center;
    gap: 3px;
    padding-right: 3px;
    background: #fff;
    line-height: 3px;
    font-size: 4px;
    color: #888;
}

.hscroll i {
    width: 35%;
    height: 3px;
    margin-right: 58px;
    background: #d8dade;
}

/* вкладки аркушів */
.tabs {
    flex: none;
    display: flex;
    align-items: stretch;
    height: 13px;
    padding: 0 3px 0 9px;
}

.tab-icon {
    flex: none;
    width: 14px;
    display: flex;
    align-items: center;
    justify-content: center;
}

.tab-icon svg {
    width: 6px;
    height: 6px;
}

.tab-list {
    flex: 1;
    min-width: 0;
    display: flex;
    gap: 1px;
    margin: 0 1px 0 3px;
    overflow: hidden;
}

.tab {
    flex: none;
    display: flex;
    align-items: center;
    gap: 4px;
    padding: 2px 4px 0;
    white-space: pre;
    border-bottom: 1px solid transparent;
}

.tab b {
    width: 6px;
    height: 6px;
    margin-right: -2px;
    border-radius: 50%;
    background: #c9d1dc;
    color: #333;
    font-size: 4px;
    text-align: center;
}

.tab.red { border-bottom-color: #f33; }
.tab.green { border-bottom-color: #93c47d; }

.tab.active {
    background: #e1e9f7;
    color: #0b57d0;
    font-weight: 700;
}

.active b {
    background: #fff;
}

.active .caret {
    background: #0b57d0;
}

.sum {
    align-self: center;
    flex: none;
    height: 9px;
    margin-left: 29px;
    padding: 0 4px;
    display: flex;
    align-items: center;
    gap: 4px;
    border-radius: 2px;
    background: #c4eed0;
    color: #0b5226;
    font-weight: 500;
}

.side {
    flex: none;
    width: 14px;
    display: flex;
    flex-direction: column;
    align-items: center;
    gap: 13px;
    padding: 5px 0 6px 5px;
}

.side svg {
    width: 6px;
    height: 6px;
}

.side hr {
    width: 7px;
    margin: -2px 0;
    border: 0;
    border-top: 1px solid #ccc;
}

.side-end {
    margin-top: auto;
}

/* панель задач Windows */
.taskbar {
    flex: none;
    height: 24px;
    display: flex;
    align-items: center;
    padding: 0 4px 0 7px;
    background: linear-gradient(90deg, #dfeaf5, #d3daef 60%, #dde6f3);
    font: 6px/8px "Open Sans", sans-serif;
}

.weather {
    display: flex;
    align-items: center;
    gap: 3px;
    width: 169px;
}

.weather svg {
    width: 12px;
    height: 13px;
}

.weather span {
    color: #666;
}

.start svg {
    width: 13px;
    height: 13px;
}

.win-search {
    width: 110px;
    height: 15px;
    margin-left: 7px;
    display: flex;
    align-items: center;
    gap: 6px;
    padding: 0 8px 0 4px;
    border-radius: 8px;
    background: #f1f5fb;
    font-size: 7px;
}

.win-search svg {
    width: 9px;
    height: 9px;
}

.win-search input {
    flex: 1;
    width: 40px;
}

.win-search .food {
    width: 25px;
    height: 14px;
}

::placeholder {
    color: #555;
    opacity: 1;
}

.apps {
    flex: 1;
    display: flex;
    justify-content: space-between;
    margin: 0 43px 0 2px;
}

.app {
    position: relative;
    width: 19px;
    height: 20px;
    display: flex;
    align-items: center;
    justify-content: center;
    border-radius: 2px;
}

.app svg {
    width: 13px;
    height: 13px;
}

.app b {
    position: absolute;
    top: 1px;
    right: 1px;
    width: 8px;
    height: 8px;
    border-radius: 50%;
    background: #1473c4;
    color: #fff;
    font-size: 6px;
    font-weight: 400;
}

.app.run::after,
.app.current::after {
    content: "";
    position: absolute;
    bottom: 0;
    width: 3px;
    height: 1px;
    background: #777;
}

.app.current {
    background: #f1f5fb;
}

.app.current::after {
    width: 8px;
    background: #0b7dd8;
}

.tray {
    display: flex;
    align-items: center;
    gap: 4px;
}

.tray svg {
    width: 8px;
    height: 8px;
}

.tray svg:first-child {
    margin-right: 5px;
}

.lang {
    text-align: center;
    margin: 0 4px;
}

.clock {
    text-align: right;
    margin-left: 4px;
}
</style>
